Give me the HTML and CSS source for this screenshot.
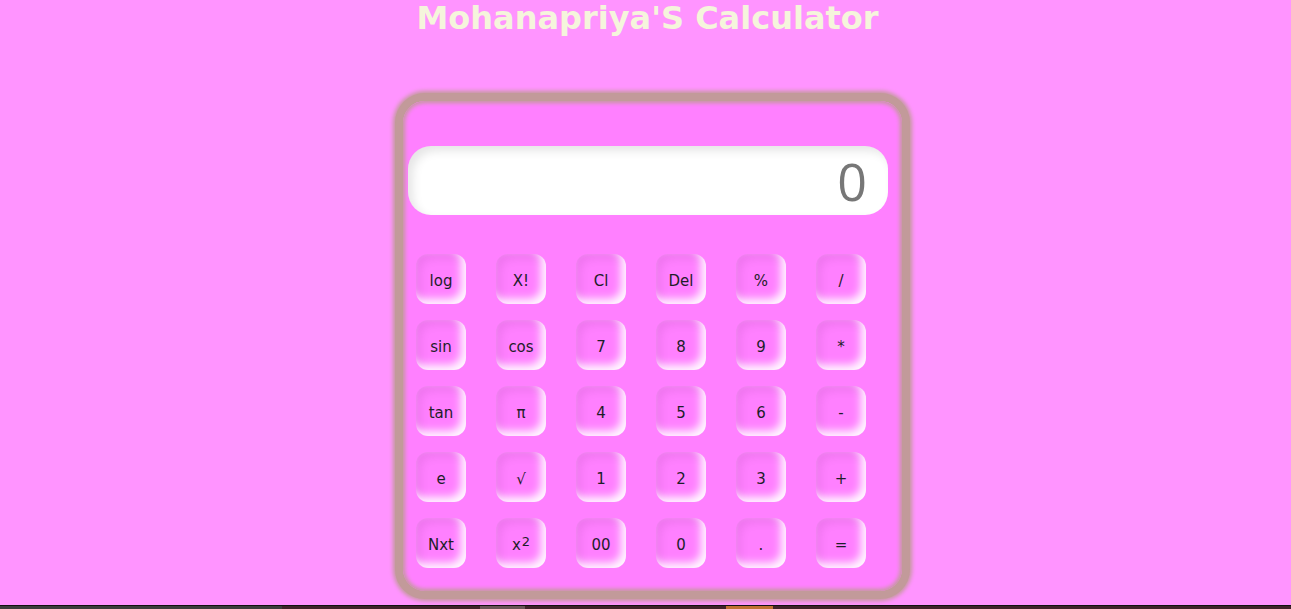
FILE: index.html
```html
<!DOCTYPE html>
<html lang="en">
<head>
<meta charset="utf-8">
<title>Mohanapriya'S Calculator</title>
<link rel="stylesheet" href="styles.css">
</head>
<body>
<div class="page">
  <h1 class="title">Mohanapriya'S Calculator</h1>
  <div class="stage">
    <div class="calc">
      <div class="display">0</div>
      <div class="keys">
        <button class="key">log</button>
        <button class="key">X!</button>
        <button class="key">Cl</button>
        <button class="key">Del</button>
        <button class="key">%</button>
        <button class="key">/</button>
        <button class="key">sin</button>
        <button class="key">cos</button>
        <button class="key">7</button>
        <button class="key">8</button>
        <button class="key">9</button>
        <button class="key">*</button>
        <button class="key">tan</button>
        <button class="key">&#960;</button>
        <button class="key">4</button>
        <button class="key">5</button>
        <button class="key">6</button>
        <button class="key">-</button>
        <button class="key">e</button>
        <button class="key">&#8730;</button>
        <button class="key">1</button>
        <button class="key">2</button>
        <button class="key">3</button>
        <button class="key">+</button>
        <button class="key">Nxt</button>
        <button class="key">x<sup class="sup">2</sup></button>
        <button class="key">00</button>
        <button class="key">0</button>
        <button class="key">.</button>
        <button class="key">=</button>
      </div>
    </div>
  </div>
</div>
<div class="taskbar">
  <span class="seg seg-gray"></span>
  <span class="seg seg-dark1"></span>
  <span class="seg seg-light"></span>
  <span class="seg seg-dark2"></span>
  <span class="seg seg-orange"></span>
  <span class="seg seg-dark3"></span>
</div>
</body>
</html>
```

FILE: styles.css
```css
* { box-sizing: border-box; }

html, body {
  margin: 0;
  padding: 0;
  height: 100%;
}

body {
  background: #ff94ff;
  display: flex;
  flex-direction: column;
  font-family: "DejaVu Sans", Verdana, sans-serif;
  overflow: hidden;
}

.page {
  flex: 1;
}

.title {
  margin: 0;
  text-align: center;
  font-family: "DejaVu Sans", Verdana, sans-serif;
  font-weight: bold;
  font-size: 32px;
  line-height: 37px;
  color: #f5f5dc;
  padding-left: 4px;
}

.stage {
  display: flex;
  justify-content: center;
  padding-left: 14px;
  margin-top: 56px;
}

.calc {
  width: 515px;
  height: 506px;
  background: #ff80ff;
  border: 8px solid #c29a9a;
  border-radius: 30px;
  box-shadow: 0 0 4px 2px #c29a9a, inset 0 0 4px 2px #c29a9a;
  padding: 45px 14px 22px 5px;
  display: flex;
  flex-direction: column;
}

.display {
  height: 69px;
  width: 480px;
  background: #fff;
  border-radius: 23px;
  box-shadow: inset 5px 5px 10px rgba(0, 0, 0, 0.10);
  text-align: right;
  font-family: "Open Sans", "Noto Sans", sans-serif;
  font-size: 52px;
  line-height: 69px;
  color: #777;
  padding-right: 21px;
}

.keys {
  margin-top: 39px;
  padding-left: 8px;
  display: grid;
  grid-template-columns: repeat(6, 50px);
  grid-auto-rows: 50px;
  column-gap: 30px;
  row-gap: 16px;
}

.key {
  width: 50px;
  height: 50px;
  border: none;
  border-radius: 12px;
  background: #ff80ff;
  box-shadow: inset -5px -5px 8px rgba(255, 255, 255, 0.95), inset 5px 5px 9px rgba(80, 0, 80, 0.09);
  font-family: "DejaVu Sans", Verdana, sans-serif;
  font-size: 15px;
  color: #1e1e2a;
  padding: 4px 0 0;
  display: flex;
  align-items: center;
  justify-content: center;
}

.sup {
  font-size: 13px;
  line-height: 0;
  position: relative;
  top: -3px;
  margin-left: 1px;
}

.taskbar {
  height: 4px;
  display: flex;
  border-top: 1px solid #111;
  background: #3a2026;
}

.seg { display: block; height: 100%; }
.seg-gray { width: 282px; background: #3c3c3c; }
.seg-dark1 { width: 198px; background: #40222a; }
.seg-light { width: 45px; background: #6a5458; }
.seg-dark2 { width: 201px; background: #40222a; }
.seg-orange { width: 47px; background: #c07030; }
.seg-dark3 { flex: 1; background: #40222a; }
```
